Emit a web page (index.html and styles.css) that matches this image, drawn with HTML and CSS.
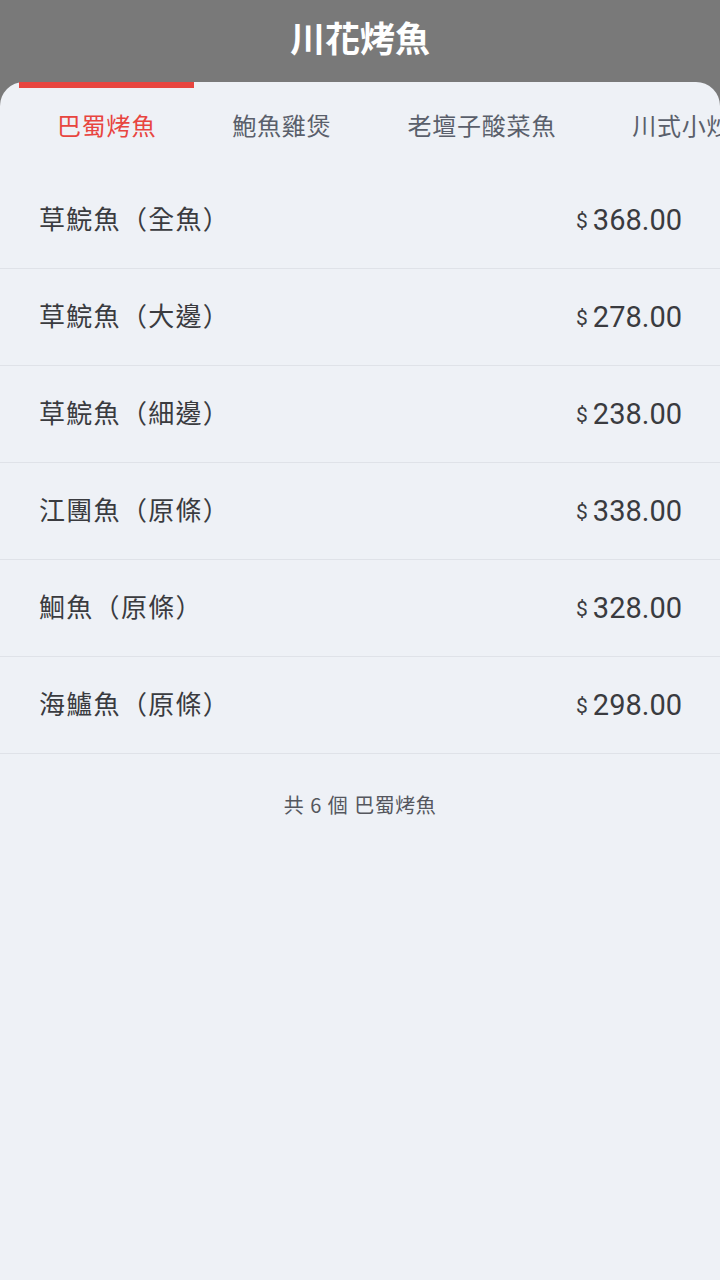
FILE: index.html
```html
<!DOCTYPE html>
<html lang="zh-Hant">
<head>
<meta charset="utf-8">
<title>川花烤魚</title>
<link rel="stylesheet" href="styles.css">
</head>
<body>
<div class="page">
  <header class="topbar"><h1 class="title">川花烤魚</h1></header>
  <main class="card">
    <nav class="tabs">
      <div class="tab active">巴蜀烤魚</div>
      <div class="tab">鮑魚雞煲</div>
      <div class="tab">老壇子酸菜魚</div>
      <div class="tab">川式小炒</div>
    </nav>
    <ul class="list">
      <li class="row"><span class="name">草鯇魚（全魚）</span><span class="price"><span class="cur">$</span>368.00</span></li>
      <li class="row"><span class="name">草鯇魚（大邊）</span><span class="price"><span class="cur">$</span>278.00</span></li>
      <li class="row"><span class="name">草鯇魚（細邊）</span><span class="price"><span class="cur">$</span>238.00</span></li>
      <li class="row"><span class="name">江團魚（原條）</span><span class="price"><span class="cur">$</span>338.00</span></li>
      <li class="row"><span class="name">鮰魚（原條）</span><span class="price"><span class="cur">$</span>328.00</span></li>
      <li class="row"><span class="name">海鱸魚（原條）</span><span class="price"><span class="cur">$</span>298.00</span></li>
    </ul>
    <p class="footer">共 6 個 巴蜀烤魚</p>
  </main>
</div>
</body>
</html>
```
FILE: styles.css
```css
* { box-sizing: border-box; }
html, body { margin: 0; padding: 0; }
body {
  width: 720px;
  height: 1280px;
  background: #797979;
  font-family: "Noto Sans CJK TC", "Noto Sans", sans-serif;
  overflow: hidden;
}
.page { display: flex; flex-direction: column; height: 1280px; }
.topbar {
  height: 82px;
  display: flex;
  align-items: center;
  justify-content: center;
  padding-bottom: 9px;
}
.title {
  margin: 0;
  color: #ffffff;
  font-size: 35px;
  font-weight: 700;
  line-height: 1;
}
.card {
  flex: 1;
  background: #eef1f6;
  border-radius: 24px 24px 0 0;
  display: flex;
  flex-direction: column;
}
.tabs {
  display: flex;
  padding-left: 19px;
  height: 90px;
  overflow: hidden;
  white-space: nowrap;
}
.tab {
  flex: none;
  padding: 0 38px;
  border-top: 6px solid transparent;
  padding-top: 22px;
  font-size: 24px;
  line-height: 30px;
  color: #5a5f6b;
  letter-spacing: 0.8px;
}
.tab.active {
  color: #e8453f;
  border-top-color: #e8453f;
}
.list { list-style: none; margin: 0; padding: 0; }
.row {
  height: 97px;
  display: flex;
  align-items: center;
  justify-content: space-between;
  padding: 0 38px 0 39px;
  border-bottom: 1px solid #dfe2e8;
}
.name {
  font-size: 26px;
  color: #3a3b3f;
  line-height: 1;
  padding-bottom: 4px;
  letter-spacing: 1.3px;
}
.price {
  font-family: Roboto, "Noto Sans", sans-serif;
  font-size: 29px;
  color: #3a3b3f;
  display: flex;
  align-items: baseline;
}
.cur {
  font-size: 21px;
  margin-right: 5px;
  position: relative;
  top: -2px;
}
.footer {
  margin: 36px 0 0;
  text-align: center;
  font-size: 20px;
  color: #55575e;
  word-spacing: 1px;
  letter-spacing: 0.5px;
}
```
